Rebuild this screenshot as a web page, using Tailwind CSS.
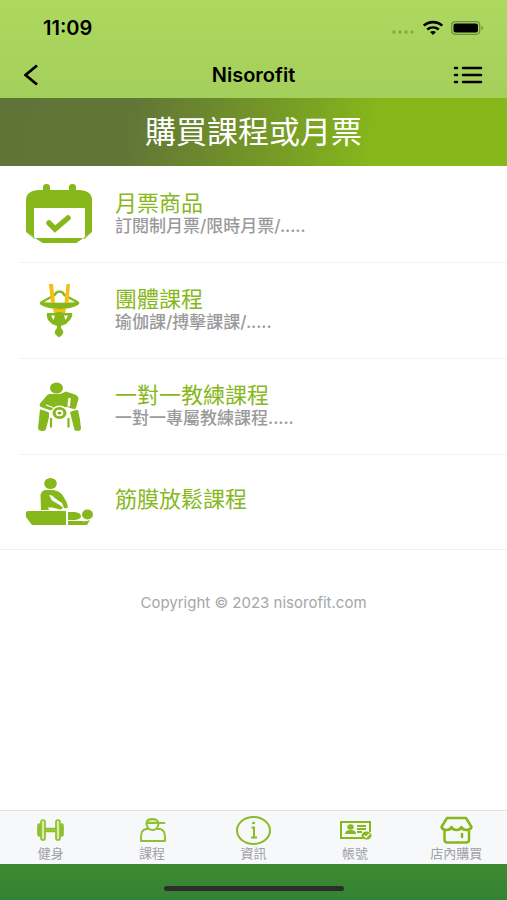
<!DOCTYPE html>
<html lang="zh-Hant">
<head>
<meta charset="utf-8">
<meta name="viewport" content="width=device-width, initial-scale=1">
<title>Nisorofit</title>
<script src="https://cdn.jsdelivr.net/npm/@tailwindcss/browser@4"></script>
</head>
<body class="flex min-h-screen flex-col bg-white font-['Inter','Noto_Sans_CJK_TC',sans-serif]">
<header class="bg-linear-to-b from-[#add95f] to-[#a3cf5b] text-black">
  <div class="flex h-13 items-center justify-between pt-1 pr-6 pl-[43px]">
    <span class="text-xl font-semibold">11:09</span>
    <div class="flex items-center gap-2">
      <svg class="mt-2 h-1 w-6" viewBox="0 0 24 4" fill="#84a84b" aria-hidden="true"><circle cx="3" cy="2" r="1.700"/><circle cx="9" cy="2" r="1.700"/><circle cx="15" cy="2" r="1.700"/><circle cx="21" cy="2" r="1.700"/></svg>
      <svg class="h-4 w-5" viewBox="0 0 20 16" fill="none" stroke="#000" stroke-width="2.600" aria-hidden="true"><path d="M.8 5.600C6 .9 14 .9 19.200 5.600M4.200 9.600c3.400-2.900 8.200-2.900 11.600 0"/><path d="M7 12c1.800-1.500 4.200-1.500 6 0l-3 3z" fill="#000" stroke="none"/></svg>
      <svg class="h-3.5 w-8" viewBox="0 0 32 14" aria-hidden="true"><rect x=".7" y=".7" width="28" height="12.600" rx="3.500" fill="none" stroke="#6f8e42" stroke-width="1.200"/><rect x="2.500" y="2.500" width="24.500" height="9" rx="2" fill="#000"/><path d="M30.300 5v4q1.700-.6 1.700-2t-1.700-2" fill="#6f8e42"/></svg>
    </div>
  </div>
  <div class="grid h-[46px] grid-cols-3 items-center px-6">
    <button aria-label="返回" class="justify-self-start"><svg class="h-6 w-4" viewBox="0 0 16 24" fill="none" stroke="#000" stroke-width="2.800"><path d="M13 2.500 1.500 12 13 21.500"/></svg></button>
    <h1 class="text-center text-xl font-semibold">Nisorofit</h1>
    <button aria-label="選單" class="justify-self-end"><svg class="h-5 w-[30px]" viewBox="0 0 30 20" fill="none" stroke="#000" stroke-width="2.600" stroke-linecap="round"><path d="M2 3h2M2 10h2M2 17h2M10 3h18M10 10h18M10 17h18"/></svg></button>
  </div>
</header>
<h2 class="flex h-17 items-center justify-center bg-[linear-gradient(100deg,#607437_0%,#617537_25%,#6a852f_38%,#769b25_55%,#86b81b_74%)] text-[31px] text-white">購買課程或月票</h2>
<main class="flex-1">
  <ul class="text-[#86b81b]">
    <li class="ml-5 border-b border-[#f2f2f2]"><a href="#pass" class="flex h-24 items-center pl-[3px]">
      <svg class="h-18 w-18 shrink-0" viewBox="0 0 72 72" fill="currentColor" aria-hidden="true"><path d="M20 12V9q0-3 3.500-3T27 9v3h19V9q0-3 3.500-3T53 9v3h4q12 1 12 10v32L53 65H20L3 54V22q0-9 12-10z"/><path d="M11 30h51v30H11z" fill="#fff"/><path d="M3 54l17 11H53l16-11-7 6.500H11z"/><path d="m26 45 6 6 13-11" fill="none" stroke="currentColor" stroke-width="5.500" stroke-linecap="round"/></svg>
      <span class="ml-5 flex flex-col"><span class="text-[22px]/6">月票商品</span><span class="text-[17px]/[23px] font-medium text-[#9a9a9c]">訂閱制月票/限時月票/.....</span></span>
    </a></li>
    <li class="ml-5 border-b border-[#f2f2f2]"><a href="#group" class="flex h-[95px] items-center pl-[3px]">
      <svg class="h-18 w-18 shrink-0" viewBox="0 0 72 72" fill="currentColor" aria-hidden="true"><path d="M18 27.500 30 21q2-1 3-3 3.500-3 7 0 1 2 3 3l12 6.500" fill="none" stroke="currentColor" stroke-width="2.500"/><path d="M17 27q19 1.500 39 0 1 2-1 3-7 4-18.500 4T18 30q-2-1-1-3"/><path d="M26 9h4l2 19h-4zm17.500 0H47l-1.500 19h-4zM30 34h13l-1 4H31z" fill="#f7bf13"/><path fill-rule="evenodd" d="M24 38h8q4-2 9 0h8q1 3-2 7l-4 4-5 2v2q4 4 1 7l-3 2.500-3-2.500q-3-3 1-7v-2l-5-2-4-4q-2-4-1-7m4 2.500 2.500 4.500 1.500-4.500zm17 0h-4l1.500 4.500z"/></svg>
      <span class="ml-5 flex flex-col"><span class="text-[22px]/6">團體課程</span><span class="text-[17px]/[23px] font-medium text-[#9a9a9c]">瑜伽課/搏擊課課/.....</span></span>
    </a></li>
    <li class="ml-5 border-b border-[#f2f2f2]"><a href="#personal" class="flex h-[95px] items-center pl-[3px]">
      <svg class="h-18 w-18 shrink-0" viewBox="0 0 72 72" fill="currentColor" aria-hidden="true"><ellipse cx="33.500" cy="17" rx="6.500" ry="5.500"/><path d="M27 23h10l6-2.500 9 3q3 1 3.500 4L53 37q-1 1.500-4 .5l-5-1.500H32l-4 3.500L18 36q-2-1-1-3.500l6-7q1-2.500 4-2.500"/><path d="M46.500 27l-.8 8.500" fill="none" stroke="#fff" stroke-width="2.500"/><path d="M23 34l7 2.500" fill="none" stroke="#fff" stroke-width="1.300"/><path d="M17 38.500q5 1 9 3V46l-3 12q-.5 2-4 2t-4-3zM47 41q4-2 8-2 2 8 3 18 0 3-3.500 3T51 57z"/><path d="M28 47v9.500M45.500 47v9.500" fill="none" stroke="currentColor" stroke-width="2.200"/><ellipse cx="36.500" cy="42" rx="8.700" ry="7.500" fill="#fff"/><ellipse cx="36.500" cy="42" rx="7" ry="6"/><ellipse cx="36.500" cy="42" rx="3.800" ry="3.200" fill="#fff"/><ellipse cx="36.500" cy="42" rx="2" ry="1.600"/></svg>
      <span class="ml-5 flex flex-col"><span class="text-[22px]/6">一對一教練課程</span><span class="text-[17px]/[23px] font-medium text-[#9a9a9c]">一對一專屬教練課程.....</span></span>
    </a></li>
    <li class="border-b border-[#f0f0f0]"><a href="#massage" class="flex h-[94px] items-center pl-[23px]">
      <svg class="h-18 w-18 shrink-0" viewBox="0 0 72 72" fill="currentColor" aria-hidden="true"><ellipse cx="27.500" cy="17.500" rx="6.300" ry="5.500"/><path d="M17.500 29q1-5 6-5h7q6 1 9 5l4 7 1.500 5q-1 2-4 1l-2-5-6-4-4-3.500-3-.5 3 5.500 7 4 4 3q-1 2-3 2l-8-2h-4l1 2.500H18z"/><path d="M5 45h38v14H9l-6-8q-1-6 2-6m40 1h7q6 1 6 4t-6 4h-7z"/><ellipse cx="64.500" cy="48.500" rx="5.500" ry="5"/><path d="M45 55h14q4 1 8-1l-3 5H45z"/></svg>
      <span class="ml-5 pb-1.5 text-[22px]/6">筋膜放鬆課程</span>
    </a></li>
  </ul>
  <p class="pt-[41px] pb-6 text-center text-[15px]/6 text-[#a6a6a6]">Copyright © 2023 nisorofit.com</p>
</main>
<nav class="grid grid-cols-5 border-t border-[#e2e2e5] bg-[#f7f8fa] pt-1 text-center text-[13px]/3 text-[#a0a0a4]">
  <a href="#fitness" class="flex h-[49px] flex-col items-center"><svg class="h-8 w-9" viewBox="0 0 36 32" fill="#d7eda7" stroke="#8fc031" stroke-width="1.700" aria-hidden="true"><path d="M11 13.500h14v3H11z" fill="#9bc84a"/><rect x="5" y="9" width="3" height="12" rx="1.500" fill="#8fc031"/><rect x="27" y="9" width="3" height="12" rx="1.500" fill="#8fc031"/><rect x="8" y="5" width="4" height="20" rx="2"/><rect x="23" y="5" width="4" height="20" rx="2"/></svg>健身</a>
  <a href="#course" class="flex h-[49px] flex-col items-center"><svg class="h-8 w-9" viewBox="0 0 36 32" fill="none" stroke="#8fc031" stroke-width="1.900" stroke-linejoin="round" stroke-linecap="round" aria-hidden="true"><path d="M12.500 8.500q0-4.500 6-4.500 5 0 6 4h6H13" fill="#d7eda7"/><path d="M12.500 9q1 6 6 6t6-6M13.500 14H12q-5 1-5 8v4h24v-4q0-7-5-8h-2.500"/></svg>課程</a>
  <a href="#info" class="flex h-[49px] flex-col items-center"><svg class="h-8 w-9" viewBox="0 0 36 32" fill="none" stroke="#8abb27" stroke-width="2" aria-hidden="true"><ellipse cx="18.500" cy="15.500" rx="16.500" ry="13.500"/><path d="M16.500 12.500h2.500v10M16 22.500h6"/><ellipse cx="18.500" cy="8" rx="1.600" ry="1.300" fill="#8abb27" stroke="none"/></svg>資訊</a>
  <a href="#account" class="flex h-[49px] flex-col items-center"><svg class="h-8 w-9" viewBox="0 0 36 32" fill="none" stroke="#86b81b" stroke-width="2" aria-hidden="true"><path d="M26 23H4V7h29v10"/><path d="M20 11h9M20 14h9M20 17h5"/><ellipse cx="13.500" cy="12" rx="3.200" ry="2.800" fill="#86b81b" stroke="none"/><path d="M8 19q0-4 5.500-4t5.500 4z" fill="#86b81b" stroke="none"/><ellipse cx="29.500" cy="20.500" rx="5" ry="4" fill="#86b81b" stroke="none"/><path d="m27 20.500 2 1.800 3.500-3.500" stroke="#fff" stroke-width="1.300"/></svg>帳號</a>
  <a href="#store" class="flex h-[49px] flex-col items-center"><svg class="h-8 w-9" viewBox="0 0 36 32" fill="none" stroke="#86b81b" stroke-width="2.500" stroke-linejoin="round" stroke-linecap="round" aria-hidden="true"><path d="M9 3h19l5.500 9q-1 3-5 3-4 0-5-3-1 3-5 3t-5-3q-1 3-5 3-4 0-5-3zM6.500 16v9q0 2.500 3 2.500H28q3 0 3-2.500v-9M24 19v3"/></svg>店內購買</a>
</nav>
<footer class="flex h-9 items-center justify-center bg-linear-to-b from-[#3d8a32] to-[#348233] pt-3"><div class="h-[5px] w-45 rounded-full bg-[#2b2d2a]"></div></footer>
</body>
</html>
